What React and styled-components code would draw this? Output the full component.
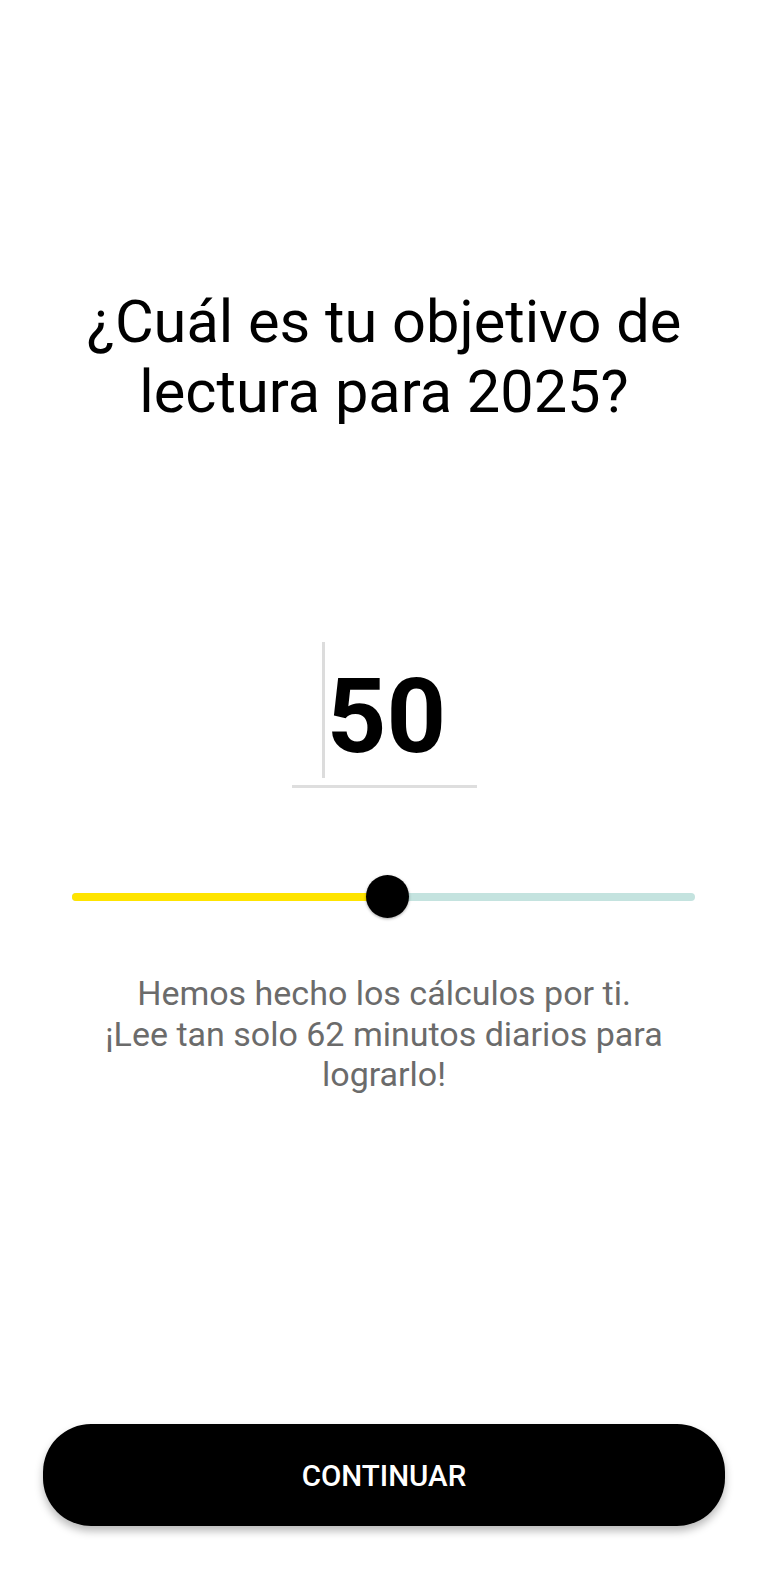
import React, { useState } from "react";
import styled, { createGlobalStyle } from "styled-components";

const GlobalStyle = createGlobalStyle`
  html, body {
    margin: 0;
    padding: 0;
    background: #ffffff;
  }
  body {
    font-family: Roboto, "Noto Sans", "Liberation Sans", sans-serif;
    -webkit-font-smoothing: antialiased;
  }
  * {
    box-sizing: border-box;
  }
`;

function App() {
  const [goal] = useState(50);
  const min = 1;
  const max = 98;
  const percent = ((goal - min) / (max - min)) * 100;

  return (
    <>
      <GlobalStyle />
      <Screen>
        <Title>
          ¿Cuál es tu objetivo de
          <br />
          lectura para 2025?
        </Title>

        <GoalField>
          <Caret />
          <GoalNumber>{goal}</GoalNumber>
        </GoalField>

        <Slider>
          <Track>
            <Fill style={{ width: `${percent}%` }} />
          </Track>
          <Thumb style={{ left: `${percent}%` }} />
        </Slider>

        <Hint>
          Hemos hecho los cálculos por ti.
          <br />
          ¡Lee tan solo 62 minutos diarios para lograrlo!
        </Hint>

        <Spacer />

        <ContinueButton type="button">CONTINUAR</ContinueButton>
      </Screen>
    </>
  );
}

const Screen = styled.div`
  display: flex;
  flex-direction: column;
  align-items: center;
  min-height: 1569px;
  padding: 287px 0 43px;
`;

const Title = styled.h1`
  margin: 0;
  font-size: 59.5px;
  line-height: 70px;
  font-weight: 400;
  color: #000;
  text-align: center;
`;

const GoalField = styled.div`
  margin-top: 215px;
  width: 185px;
  display: flex;
  justify-content: center;
  align-items: flex-end;
  padding-bottom: 7px;
  border-bottom: 3px solid #dedede;
`;

const Caret = styled.span`
  display: block;
  width: 3px;
  height: 136px;
  background: #dcdcdc;
  margin-right: 2px;
`;

const GoalNumber = styled.span`
  display: block;
  font-size: 104px;
  line-height: 104px;
  font-weight: 700;
  color: #000;
  margin-bottom: 9px;
`;

const Slider = styled.div`
  position: relative;
  margin-top: 87px;
  margin-left: 72px;
  align-self: flex-start;
  width: 623px;
  height: 44px;
  display: flex;
  align-items: center;
`;

const Track = styled.div`
  width: 100%;
  height: 8px;
  border-radius: 4px;
  background: #c4e3df;
  overflow: hidden;
`;

const Fill = styled.div`
  height: 100%;
  background: #ffe400;
`;

const Thumb = styled.div`
  position: absolute;
  top: 0;
  width: 43px;
  height: 43px;
  margin-left: -21px;
  border-radius: 50%;
  background: #000;
  box-shadow: 0 1px 3px rgba(0, 0, 0, 0.35);
`;

const Hint = styled.p`
  margin: 54px 0 0;
  width: 620px;
  font-size: 34px;
  line-height: 40.5px;
  font-weight: 400;
  color: #6b6b6b;
  text-align: center;
`;

const Spacer = styled.div`
  flex: 1;
`;

const ContinueButton = styled.button`
  width: 682px;
  height: 102px;
  border: none;
  border-radius: 48px;
  background: #000;
  color: #fff;
  font-family: Roboto, "Noto Sans", "Liberation Sans", sans-serif;
  font-size: 29.5px;
  font-weight: 500;
  padding-top: 3px;
  box-shadow: 0 5px 9px rgba(0, 0, 0, 0.28);
  cursor: pointer;
`;

export default App;
